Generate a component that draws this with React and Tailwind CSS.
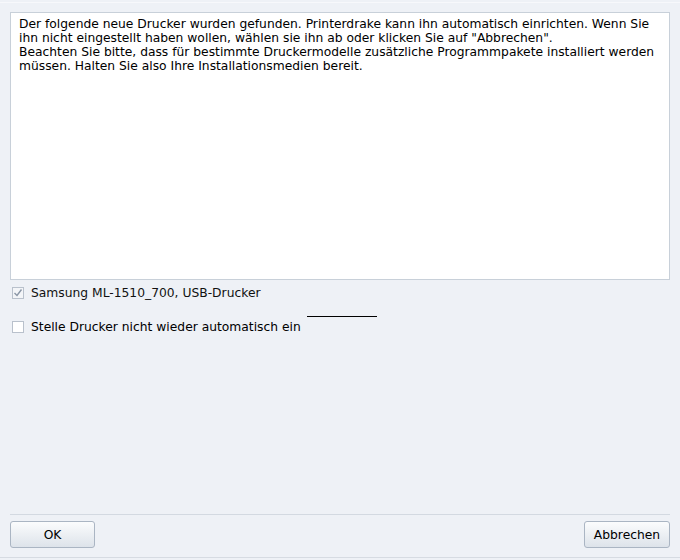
export default function App() {
  return (
    <div className="w-[680px] h-[560px] bg-[#eef1f6] flex flex-col text-[12.3px] text-black" style={{ fontFamily: '"DejaVu Sans", sans-serif' }}>
      <div className="h-[3px] border-b border-[#f7f8fb]" />
      <div className="flex flex-col px-[10px] pt-[9px] flex-1">
        <div className="h-[268px] bg-white border border-[#c8d0d9] px-[8px] pt-[4px] leading-[14px]">
          <p>Der folgende neue Drucker wurden gefunden. Printerdrake kann ihn automatisch einrichten. Wenn Sie<br />ihn nicht eingestellt haben wollen, wählen sie ihn ab oder klicken Sie auf "Abbrechen".</p>
          <p>Beachten Sie bitte, dass für bestimmte Druckermodelle zusätzliche Programmpakete installiert werden<br />müssen. Halten Sie also Ihre Installationsmedien bereit.</p>
        </div>
        <div className="flex items-center gap-[7px] pl-[2px] mt-[7px] h-[12px]">
          <div className="w-[12px] h-[12px] border border-[#b9c1cc] bg-[#f3f5f8] flex items-center justify-center">
            <svg width="10" height="10" viewBox="0 0 10 10">
              <path d="M1.5 5 L4 7.5 L8.5 1.5" fill="none" stroke="#8a96a6" strokeWidth="1.4" />
            </svg>
          </div>
          <span className="text-[#111] whitespace-nowrap">Samsung ML-1510_700, USB-Drucker</span>
        </div>
        <div className="flex items-center mt-[22px] h-[12px] pl-[2px]">
          <div className="w-[12px] h-[12px] border border-[#b9c1cc] bg-white" />
          <span className="ml-[7px] whitespace-nowrap">Stelle Drucker nicht wieder automatisch ein</span>
          <div className="ml-[6px] w-[70px] h-[1px] bg-black self-start -mt-[5px]" />
        </div>
        <div className="flex-1" />
        <div className="border-t border-[#d3d9e1]" />
        <div className="flex justify-between pt-[6px] pb-[9px]">
          <button className="w-[85px] h-[27px] rounded-[3px] border border-[#aab5c3] bg-gradient-to-b from-[#fbfcfd] to-[#dde3ea] text-[12.3px] pt-[1px]">OK</button>
          <button className="w-[86px] h-[27px] rounded-[3px] border border-[#aab5c3] bg-gradient-to-b from-[#fbfcfd] to-[#dde3ea] text-[12.3px] pt-[1px]">Abbrechen</button>
        </div>
      </div>
      <div className="h-[3px] border-t border-[#d6dbe2]" />
    </div>
  );
}
